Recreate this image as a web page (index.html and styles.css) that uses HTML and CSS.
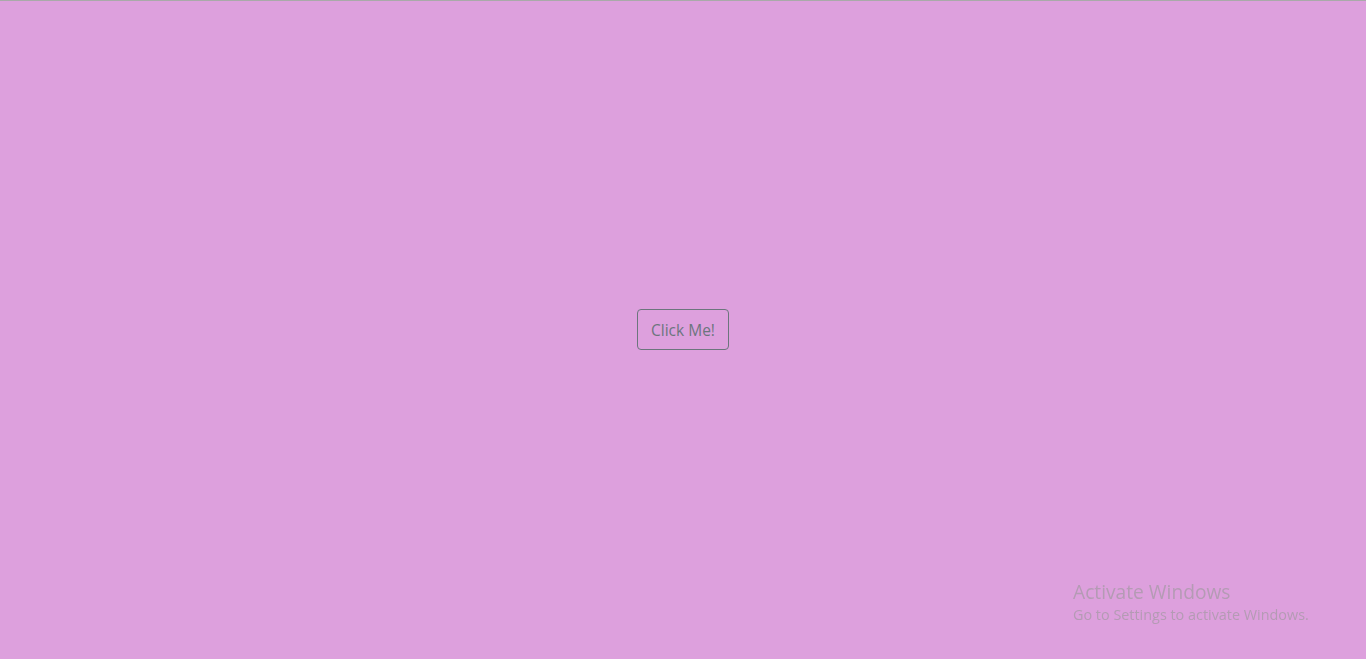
FILE: index.html
```html
<!DOCTYPE html>
<html>
<head>
<meta charset="utf-8">
<link rel="stylesheet" href="styles.css">
</head>
<body>
<main class="stage">
  <button class="btn">Click Me!</button>
</main>
<div class="watermark">
  <div class="wm-title">Activate Windows</div>
  <div class="wm-sub">Go to Settings to activate Windows.</div>
</div>
</body>
</html>
```

FILE: styles.css
```css
html, body {
  margin: 0;
  padding: 0;
  height: 100%;
}
body {
  background: #dda0dd;
  box-shadow: inset 0 1px 0 #a9a9a9;
  font-family: "Open Sans", "Noto Sans", sans-serif;
  overflow: hidden;
}
.stage {
  height: 100%;
  display: flex;
  align-items: center;
  justify-content: center;
}
.btn {
  font-family: "Open Sans", "Noto Sans", sans-serif;
  font-size: 15.5px;
  line-height: 23px;
  color: #6c757d;
  background: transparent;
  border: 1px solid #6c757d;
  border-radius: 4px;
  padding: 9px 10px 7px;
  width: 92px;
  height: 41px;
  box-sizing: border-box;
  cursor: pointer;
}
.watermark {
  position: fixed;
  left: 1073px;
  top: 580px;
  color: #b49bb4;
  font-family: "Open Sans", "Noto Sans", sans-serif;
}
.wm-title {
  font-size: 19.2px;
  line-height: 24px;
}
.wm-sub {
  font-size: 14.4px;
  line-height: 22px;
}
```
